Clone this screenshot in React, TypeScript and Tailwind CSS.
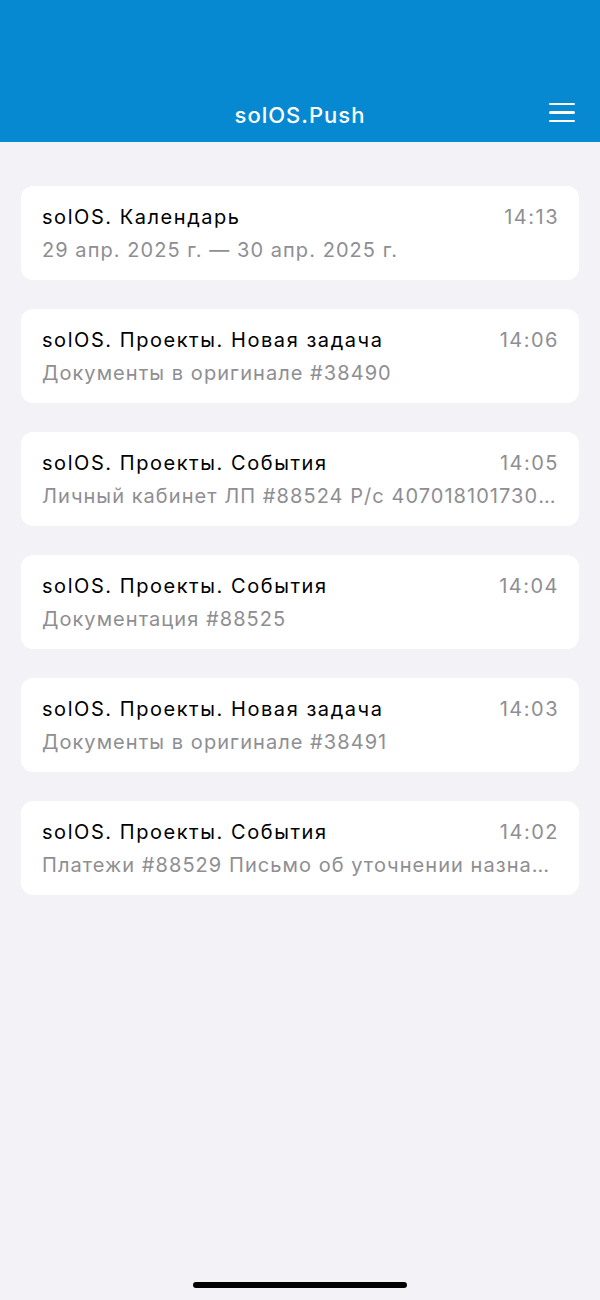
import React from 'react'

interface Notice {
  title: string
  text: string
  time: string
}

const notices: Notice[] = [
  { title: 'solOS. Календарь', text: '29 апр. 2025 г. — 30 апр. 2025 г.', time: '14:13' },
  { title: 'solOS. Проекты. Новая задача', text: 'Документы в оригинале #38490', time: '14:06' },
  { title: 'solOS. Проекты. События', text: 'Личный кабинет ЛП #88524 Р/с 40701810173000000001', time: '14:05' },
  { title: 'solOS. Проекты. События', text: 'Документация #88525', time: '14:04' },
  { title: 'solOS. Проекты. Новая задача', text: 'Документы в оригинале #38491', time: '14:03' },
  { title: 'solOS. Проекты. События', text: 'Платежи #88529 Письмо об уточнении назначения платежа', time: '14:02' },
]

export default function App() {
  return (
    <div className="relative w-[600px] h-[1300px] bg-[#f2f2f7] font-['Inter','Noto_Sans',sans-serif] overflow-hidden">
      {/* header */}
      <div className="relative h-[142px] bg-[#0789d2] flex items-end justify-center pb-[13px]">
        <h1 className="text-white text-[22px] leading-[28px] font-medium tracking-[1px]">solOS.Push</h1>
        <div className="absolute right-[25px] bottom-[20px] w-[26px] flex flex-col gap-[6px]">
          <div className="h-[2.5px] bg-white rounded-full" />
          <div className="h-[2.5px] bg-white rounded-full" />
          <div className="h-[2.5px] bg-white rounded-full" />
        </div>
      </div>

      {/* list */}
      <div className="flex flex-col gap-[29px] px-[21px] pt-[44px]">
        {notices.map((n, i) => (
          <div key={i} className="bg-white rounded-[12px] pl-[21px] pr-[20px] pt-[19px] pb-[18px] flex flex-col gap-[9px]">
            <div className="flex items-center justify-between gap-4">
              <span className="text-[20px] leading-[24px] text-black tracking-[1.55px]">{n.title}</span>
              <span className="text-[20px] leading-[24px] text-[#8e8e93] tracking-[1.5px]">{n.time}</span>
            </div>
            <div className="text-[20px] leading-[24px] text-[#8e8e93] tracking-[1.05px] truncate pr-[2px]">{n.text}</div>
          </div>
        ))}
      </div>

      {/* home indicator */}
      <div className="absolute left-[193px] top-[1282px] w-[214px] h-[6px] bg-black rounded-full" />
    </div>
  )
}
